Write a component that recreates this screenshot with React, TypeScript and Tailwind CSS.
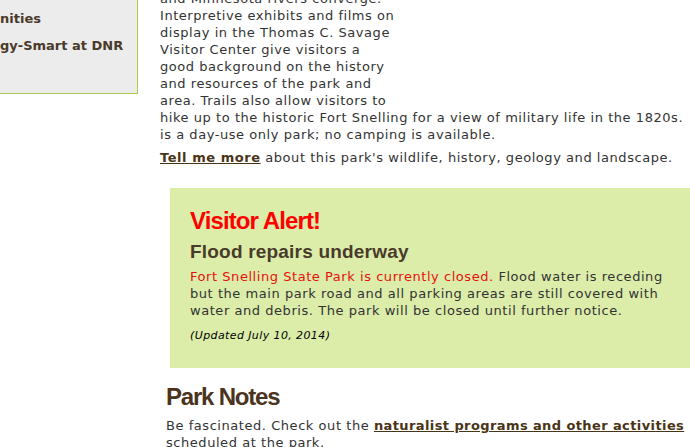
export default function App() {
  const body = "font-['DejaVu_Sans',Verdana,sans-serif] text-[13px] leading-[17px] tracking-[0.55px] text-[#333]";
  const head = "font-['Liberation_Sans',Helvetica,Arial,sans-serif] font-bold";
  return (
    <div className="relative h-[447px] w-[690px] overflow-hidden bg-white">
      <div className="flex">
        {/* sidebar */}
        <div className="w-[138px] shrink-0">
          <div className="h-[94px] border-b border-r border-[#a9c94f] bg-[#ececec] pt-[10px]">
            <p className="font-['DejaVu_Sans',Verdana,sans-serif] text-[13px] leading-[17px] font-bold text-[#4a3a2a]">nities</p>
            <p className="mt-[10px] font-['DejaVu_Sans',Verdana,sans-serif] text-[13px] leading-[17px] font-bold text-[#4a3a2a]">gy-Smart at DNR</p>
          </div>
        </div>

        {/* main column */}
        <div className="ml-[22px] w-[600px] shrink-0">
          <div className={`${body} -mt-[10px] w-[532px]`}>
            <div className="float-right h-[118px] w-[295px]" />
            <p>
              and Minnesota rivers converge. Interpretive exhibits and films on display in the Thomas C. Savage Visitor
              Center give visitors a good background on the history and resources of the park and area. Trails also
              allow visitors to hike up to the historic Fort Snelling for a view of military life in the 1820s. is a
              day-use only park; no camping is available.
            </p>
            <p className="mt-[6px] clear-both">
              <a className="font-bold text-[#4a3416] underline">Tell me more</a> about this park's wildlife, history,
              geology and landscape.
            </p>
          </div>

          <div className="ml-[10px] mt-[22px] h-[180px] bg-[#dcedaa] px-5 pt-[19px]">
            <h2 className={`${head} text-[24px] leading-[28px] tracking-[-0.9px] text-[#ff0000]`}>Visitor Alert!</h2>
            <h3 className={`${head} mt-[6px] text-[19px] leading-[22px] tracking-[0.2px] text-[#4a3a2a]`}>Flood repairs underway</h3>
            <p className={`${body} mt-[5px] w-[490px]`}>
              <span className="text-[#e8100c]">Fort Snelling State Park is currently closed.</span> Flood water is
              receding but the main park road and all parking areas are still covered with water and debris. The park
              will be closed until further notice.
            </p>
            <p className="mt-[10px] font-['DejaVu_Sans',Verdana,sans-serif] text-[11px] leading-[14px] tracking-[0.4px] italic text-black">
              (Updated July 10, 2014)
            </p>
          </div>

          <div className="ml-[6px] mt-[15px] w-[526px]">
            <h2 className={`${head} text-[24px] leading-[28px] tracking-[-1.2px] text-[#4a3420]`}>Park Notes</h2>
            <p className={`${body} mt-[6px] leading-[16px]`}>
              Be fascinated. Check out the{" "}
              <a className="font-bold tracking-[0.4px] text-[#4a3416] underline">naturalist programs and other activities</a>{" "}
              scheduled at the park.
            </p>
          </div>
        </div>
      </div>
    </div>
  );
}
